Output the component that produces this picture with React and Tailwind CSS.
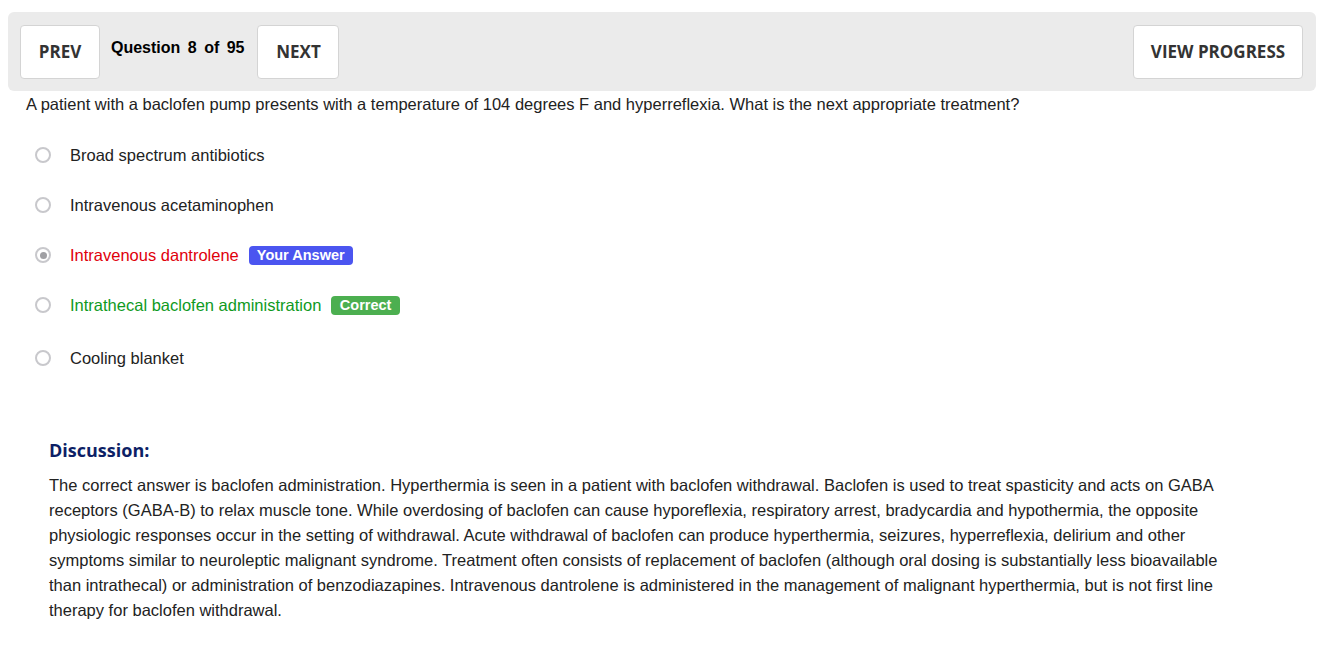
import React from 'react';

const options = [
  { text: 'Broad spectrum antibiotics' },
  { text: 'Intravenous acetaminophen' },
  { text: 'Intravenous dantrolene', status: 'yours' },
  { text: 'Intrathecal baclofen administration', status: 'correct' },
  { text: 'Cooling blanket' }
];

const NavButton = ({ children, className = '' }) => (
  <button
    type="button"
    className={`h-[54px] rounded-[4px] border border-[#d4d4d4] bg-white text-[17px] font-bold text-[#333] ${className}`}
    style={{ fontFamily: '"Open Sans", sans-serif' }}
  >
    {children}
  </button>
);

const Radio = ({ checked }) => (
  <span className="flex h-[16px] w-[16px] items-center justify-center rounded-full border-2 border-[#c8c8cc] bg-white">
    {checked && <span className="h-[7px] w-[7px] rounded-full bg-[#a0a0a4]" />}
  </span>
);

export default function App() {
  return (
    <div className="min-h-screen bg-white text-[#222]" style={{ fontFamily: '"Liberation Sans", Arial, sans-serif' }}>
      <div className="pl-2 pr-[18px] pt-3">
        <div className="flex items-center justify-between rounded-[6px] bg-[#ebebeb] pl-3 pr-[13px] pt-[13px] pb-[12px]">
          <div className="flex items-start">
            <NavButton className="w-[80px]">PREV</NavButton>
            <div className="ml-[11px] mr-[13px] pt-[11px] text-[16px] font-bold text-black [word-spacing:3px]">
              Question 8 of 95
            </div>
            <NavButton className="w-[82px]">NEXT</NavButton>
          </div>
          <NavButton className="w-[170px]">VIEW PROGRESS</NavButton>
        </div>
      </div>

      <p className="mt-[3px] pl-[26px] text-[16.5px] leading-[20px] text-[#222]">
        A patient with a baclofen pump presents with a temperature of 104 degrees F and hyperreflexia. What is the next appropriate treatment?
      </p>

      <div className="mt-[16px] pl-[35px]">
        {options.map((o, i) => (
          <div
            key={o.text}
            className={`flex h-[50px] items-center gap-[19px] ${i === 4 ? 'mt-[3px]' : ''}`}
          >
            <Radio checked={o.status === 'yours'} />
            <div className="flex items-center gap-[10px] text-[16.5px]">
              <span
                className={
                  o.status === 'yours'
                    ? 'text-[#e0000b]'
                    : o.status === 'correct'
                    ? 'text-[#0f9a1e]'
                    : 'text-[#222]'
                }
              >
                {o.text}
              </span>
              {o.status === 'yours' && (
                <span className="rounded-[4px] bg-[#4b55f0] px-[8px] py-[1px] text-[14.5px] font-bold leading-[17px] text-white">
                  Your Answer
                </span>
              )}
              {o.status === 'correct' && (
                <span className="rounded-[4px] bg-[#4caf50] px-[8.5px] py-[1px] text-[14.5px] font-bold leading-[17px] text-white">
                  Correct
                </span>
              )}
            </div>
          </div>
        ))}
      </div>

      <div className="mt-[55px] pl-[49px] pr-[108px]">
        <h3
          className="text-[18px] font-bold leading-[24px] text-[#0d1f66]"
          style={{ fontFamily: '"Open Sans", sans-serif' }}
        >
          Discussion:
        </h3>
        <p className="mt-[11px] text-[16.5px] leading-[25px] text-[#222]">
          The correct answer is baclofen administration. Hyperthermia is seen in a patient with baclofen withdrawal. Baclofen is used to treat spasticity and acts on GABA receptors (GABA-B) to relax muscle tone. While overdosing of baclofen can cause hyporeflexia, respiratory arrest, bradycardia and hypothermia, the opposite physiologic responses occur in the setting of withdrawal. Acute withdrawal of baclofen can produce hyperthermia, seizures, hyperreflexia, delirium and other symptoms similar to neuroleptic malignant syndrome. Treatment often consists of replacement of baclofen (although oral dosing is substantially less bioavailable than intrathecal) or administration of benzodiazapines. Intravenous dantrolene is administered in the management of malignant hyperthermia, but is not first line therapy for baclofen withdrawal.
        </p>
      </div>
    </div>
  );
}
